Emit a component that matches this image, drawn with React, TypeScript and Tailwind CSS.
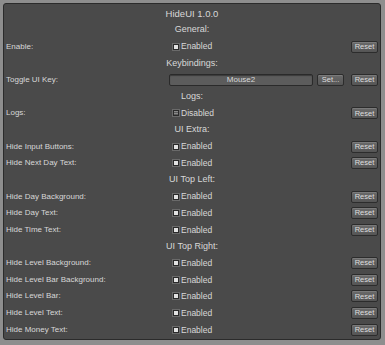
import React from "react";

const font = { fontFamily: '"Liberation Sans", Arial, sans-serif' };

function Btn({ children, w }: { children: React.ReactNode; w: string }) {
  return (
    <div
      className={`${w} h-[12px] flex items-center justify-center rounded-[2px] border border-[#2c2c2c] bg-gradient-to-b from-[#6a6a6a] to-[#555555] shadow-[inset_0_1px_0_#7a7a7a] text-[7.5px] leading-none text-[#dedede]`}
    >
      {children}
    </div>
  );
}

function Check({ on }: { on: boolean }) {
  return (
    <div className="flex items-center ml-[2px]">
      {on ? (
        <div className="w-[6px] h-[6px] bg-[#e2e2e2] border border-[#2a2a2a] shadow-[0_0_0_1px_#6a6a6a]" />
      ) : (
        <div className="w-[6px] h-[6px] bg-[repeating-linear-gradient(to_bottom,#8a8a8a_0px,#8a8a8a_1px,#5a5a5a_1px,#5a5a5a_2px)] border border-[#2a2a2a] shadow-[0_0_0_1px_#6a6a6a]" />
      )}
      <span className="ml-[2px] text-[8.5px] leading-none text-[#d8d8d8]">
        {on ? "Enabled" : "Disabled"}
      </span>
    </div>
  );
}

function Header({ children, size = "text-[9px]" }: { children: React.ReactNode; size?: string }) {
  return (
    <div className={`h-[16.67px] flex items-center justify-center ${size} leading-none text-[#d8d8d8]`}>
      {children}
    </div>
  );
}

function Row({ label, on = true }: { label: string; on?: boolean }) {
  return (
    <div className="h-[16.67px] flex items-center">
      <div className="w-[166px] pl-[1px] text-[8px] leading-none text-[#d8d8d8]">{label}</div>
      <div className="flex-1 flex items-center">
        <Check on={on} />
      </div>
      <div className="mr-[1px]">
        <Btn w="w-[27px]">Reset</Btn>
      </div>
    </div>
  );
}

export default function App() {
  return (
    <div className="w-[385px] h-[345px] bg-[#8e8e8e] pt-[3px] pl-[3px]" style={font}>
      <div className="w-[378px] h-[337px] rounded-[3px] border border-[#2b2b2b] bg-[#4a4a4a] pt-[1px] pl-[1px] pr-[1px] flex flex-col">
        <Header size="text-[9.5px]">HideUI 1.0.0</Header>
        <Header>General:</Header>
        <Row label="Enable:" />
        <Header>Keybindings:</Header>
        <div className="h-[16.67px] flex items-center">
          <div className="w-[164px] pl-[1px] text-[8px] leading-none text-[#d8d8d8]">Toggle UI Key:</div>
          <div className="w-[144px] h-[12px] flex items-center justify-center rounded-[2px] border border-[#2a2a2a] bg-[#5c5c5c] shadow-[inset_0_1px_1px_#3a3a3a] text-[8px] leading-none text-[#d8d8d8]">
            Mouse2
          </div>
          <div className="ml-[4px]">
            <Btn w="w-[27px]">Set...</Btn>
          </div>
          <div className="flex-1" />
          <div className="mr-[1px]">
            <Btn w="w-[27px]">Reset</Btn>
          </div>
        </div>
        <Header>Logs:</Header>
        <Row label="Logs:" on={false} />
        <Header>UI Extra:</Header>
        <Row label="Hide Input Buttons:" />
        <Row label="Hide Next Day Text:" />
        <Header>UI Top Left:</Header>
        <Row label="Hide Day Background:" />
        <Row label="Hide Day Text:" />
        <Row label="Hide Time Text:" />
        <Header>UI Top Right:</Header>
        <Row label="Hide Level Background:" />
        <Row label="Hide Level Bar Background:" />
        <Row label="Hide Level Bar:" />
        <Row label="Hide Level Text:" />
        <Row label="Hide Money Text:" />
      </div>
    </div>
  );
}
